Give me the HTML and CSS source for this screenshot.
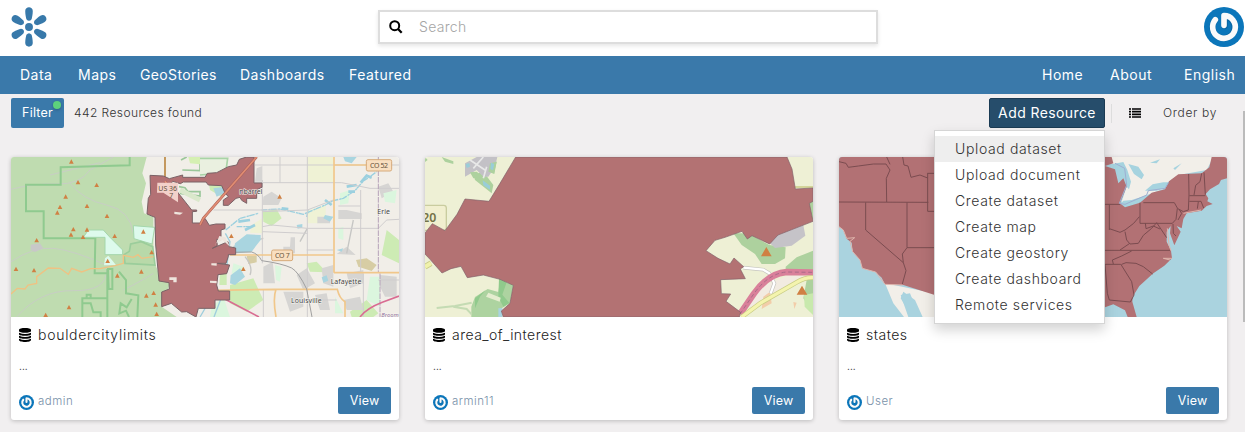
FILE: index.html
```html
<!DOCTYPE html>
<html lang="en">
<head>
<meta charset="utf-8">
<title>Resources</title>
<link rel="stylesheet" href="styles.css">
</head>
<body>
<svg class="defs" aria-hidden="true">
  <defs>
    <symbol id="gravatar" viewBox="0 0 120 120">
      <circle cx="60" cy="60" r="60" fill="#0b76ba"/>
      <path d="M62 57V28A33 33 0 1 1 34 39" fill="none" stroke="#07558a" stroke-width="19" stroke-linecap="round" opacity=".45"/>
      <path d="M60 55V26A34 34 0 1 1 34 38" fill="none" stroke="#fafafa" stroke-width="17" stroke-linecap="round" stroke-linejoin="round"/>
    </symbol>
    <symbol id="database" viewBox="0 0 36 42">
      <path d="M0 6C0-2 36-2 36 6V9C36 16 0 16 0 9Z"/>
      <path d="M0 14Q18 22 36 14V19C36 25 0 25 0 19Z"/>
      <path d="M0 23Q18 31 36 23V28C36 34 0 34 0 28Z"/>
      <path d="M0 32Q18 40 36 32V36C36 44 0 44 0 36Z"/>
    </symbol>
    <path id="petal" d="M77 32C77 17.500 100 17.500 100 32C100 43 98 50 96.500 57Q88.500 67 80.500 57C79 50 77 43 77 32Z"/>
    <path id="peak" d="M0-7L7 6H-7Z" fill="#d08043"/>
  </defs>
</svg>

<header class="header">
  <svg class="logo" viewBox="32 20 113 122" fill="#3879aa">
    <circle cx="88.500" cy="81" r="12"/>
    <use href="#petal"/>
    <use href="#petal" transform="rotate(59 88.500 81)"/>
    <use href="#petal" transform="rotate(121 88.500 81)"/>
    <use href="#petal" transform="rotate(180 88.500 81)"/>
    <use href="#petal" transform="rotate(239 88.500 81)"/>
    <use href="#petal" transform="rotate(301 88.500 81)"/>
  </svg>
  <div class="search">
    <svg class="search-icon" viewBox="0 0 14 14"><circle cx="5.700" cy="5.700" r="4.500" fill="none" stroke="#000" stroke-width="2"/><path d="M9 9L12.700 12.700" stroke="#000" stroke-width="2.300"/></svg>
    <span class="placeholder">Search</span>
  </div>
  <svg class="avatar"><use href="#gravatar"/></svg>
</header>

<nav class="nav">
  <div class="nav-main">
    <a class="w-data">Data</a><a class="w-maps">Maps</a><a class="w-stories">GeoStories</a><a class="w-dash">Dashboards</a><a>Featured</a>
  </div>
  <div class="nav-side">
    <a class="w-home">Home</a><a class="w-about">About</a><a class="w-lang">English</a>
  </div>
</nav>

<section class="toolbar">
  <div class="button filter">Filter<i class="dot"></i></div>
  <span class="count">442 Resources found</span>
  <div class="add-wrap">
    <div class="button add">Add Resource</div>
    <div class="menu">
      <a class="active">Upload dataset</a>
      <a>Upload document</a>
      <a>Create dataset</a>
      <a>Create map</a>
      <a>Create geostory</a>
      <a>Create dashboard</a>
      <a>Remote services</a>
    </div>
  </div>
  <i class="divider"></i>
  <svg class="list-icon" viewBox="0 0 12 10"><path d="M0 1H2M3 1H12M0 3.700H2M3 3.700H12M0 6.300H2M3 6.300H12M0 9H2M3 9H12" stroke="#000" stroke-width="1.700"/></svg>
  <span class="order">Order by</span>
</section>

<main class="cards">
  <article class="card">
    <svg class="map" viewBox="33 21 1164 480" preserveAspectRatio="none">
      <rect x="33" y="21" width="1164" height="480" fill="#f1eee8"/>
      <path d="M33 21H440L427 70L438 100L425 155L432 190L460 200V330L485 390L510 400L485 470L530 501H33Z" fill="#bfdcb0"/>
      <g fill="none" stroke="#c8cdc5" stroke-width="3">
        <path d="M33 118Q100 100 170 102T270 60L340 21M150 75L300 38M210 100Q250 150 320 165T400 250M33 335Q100 290 160 295T330 350M50 501Q120 420 220 422T320 360M370 420Q430 390 460 370"/>
      </g>
      <path d="M92 284L120 280L130 295L105 306L92 300Z" fill="#c8c8c8"/>
      <g fill="none" stroke="#8fca8f" stroke-width="6">
        <path d="M389 21V46L182 52V104H78V184H131V265H286L284 370H322V445H247V501M247 460H272L280 487H302V501M324 357H337V417H326ZM322 357V501M357 365L378 390V430L415 436L412 501M260 445V434H272V445M395 447L380 472L362 460L358 490L378 482L387 501"/>
      </g>
      <path d="M400 227L464 232L456 282L425 273L402 266ZM250 262L265 240L310 240L330 262L368 300V314H315V262Z" fill="#ddfaec" stroke="#a4d6ab" stroke-width="3"/>
      <path d="M372 314L388 304L392 282L424 275L458 290L465 345L375 340Z" fill="#b8d9a9" stroke="#9bcd9b" stroke-width="5"/>
      <path d="M315 325L325 317L348 345L312 346Z" fill="#ddfaec"/>
      <path d="M33 432L52 415L75 417L84 405L110 400V380L145 354L180 355L205 373L215 355L245 366L272 356L300 356L345 347L370 340V316L400 322L414 314L425 325L460 320" fill="none" stroke="#efc283" stroke-width="4"/>
      <path d="M495 21V100M543 30L560 21M547 60L600 62V33M537 110L555 113L564 125H600V138L540 130" fill="none" stroke="#9bc79a" stroke-width="5"/>
      <path d="M495 21V90" stroke="#c98e51" stroke-width="5"/>
      <path d="M565 21H600V43L570 40Z" fill="#d5f0b2"/>
      <path d="M540 120L600 150" stroke="#dae8cb" stroke-width="15"/>
      <path d="M600 25H683L678 62L655 70L600 75" fill="#eaf0e0" stroke="#a8d3a6" stroke-width="5"/>
      <g transform="translate(600 0)">
        <path d="M322 21H400V96H322ZM322 182L377 165V220H322ZM155 225L187 205V250L150 248Z" fill="#eff2d5"/>
        <path d="M25 90L80 72L65 140L30 120ZM188 185L230 178L245 205L215 228L190 215ZM90 405L160 385L190 450L140 485L90 460ZM320 340L350 335L380 367L330 365ZM450 485L500 450L535 490L520 501H455ZM560 240L597 270V340L545 315ZM60 370H80V405H58Z" fill="#cdebb4"/>
        <path d="M140 318H170V337L145 342ZM468 330L500 325L530 345L515 363L475 350Z" fill="#d7cda4"/>
        <path d="M170 55L187 48V95H165ZM190 140L215 125L245 145L235 165H188ZM352 200H390V220H352ZM415 180H440L485 190V207H415ZM190 350L218 335L225 400H190ZM272 262H285V310H250V290H270ZM290 375L320 355L345 400L310 420ZM410 312L440 290L467 315ZM365 355L400 345V410L370 400ZM250 425H310V470L270 485ZM345 435L380 430L390 480H360ZM440 370L490 360V400L450 415ZM535 110L565 100L580 125L545 145ZM540 375L590 380V440H555L540 410ZM430 450L480 440L490 480H440Z" fill="#d6d5d3"/>
        <path d="M135 320Q160 350 150 375M322 235L300 275M440 310L460 210M190 265L100 290" stroke="#c6c6c4" stroke-width="4" fill="none"/>
        <g fill="#dbf6de"><path d="M35 470L70 440L90 501H30ZM510 380H540V470L500 450ZM405 440L430 490H405ZM100 340L130 350L120 385L95 370ZM550 130L590 120L585 160L555 155ZM420 130L450 120L445 160L420 165ZM225 345L245 350L240 395L228 390ZM415 235L430 230V270L415 265Z"/></g>
        <path d="M105 280L140 253L182 255V270L170 285L155 305L110 310L103 292ZM92 376L120 355L135 380L105 405L90 400ZM40 115L75 110L72 130L50 140ZM290 225L307 222V233L293 236ZM365 382L380 376L385 392L370 398ZM430 21H470L455 40L435 34ZM375 195L400 200L390 215L370 205ZM410 300L430 295L425 305Z" fill="#a9d5e0"/>
        <path d="M185 180L240 177L275 185L310 193L340 180L376 165L400 152L430 145L465 122L490 93L510 80L530 65M77 240L120 205L175 190M320 201L325 180M110 230L155 230" fill="none" stroke="#9bd0df" stroke-width="4" stroke-dasharray="17 3 7 1"/>
        <path d="M440 110L470 105M482 98L500 77L515 83M445 125H465M115 215L150 210M135 240L165 225M245 175L265 177M375 150L395 165" fill="none" stroke="#9bd0df" stroke-width="8"/>
        <g fill="none" stroke="#cfcdce" stroke-width="3">
          <path d="M165 45H597M240 21V98M165 98H425L510 115H597M187 90V340M40 180H240M322 21V420M187 185L322 180M322 235H535L560 210L597 208M482 120V368M322 180L400 150M415 168H482M187 245L322 250M320 300H400M322 418V501M322 450H410M190 418V501M490 370V501M535 390H597M187 230L215 225L322 235"/>
        </g>
        <path d="M535 21V368M540 370V501" stroke="#b5a2b9" stroke-width="3" stroke-dasharray="17 3" fill="none"/>
        <g fill="none" stroke="#f1c78a" stroke-width="5">
          <path d="M402 21V368M402 45H500M90 315H403M402 368H597M50 421L225 418H412Q418 445 435 455V501M228 418Q218 445 228 501"/>
        </g>
        <path d="M88 307L155 306Q175 312 185 332Q245 340 275 354Q295 365 320 417L336 501" fill="none" stroke="#a0a0a0" stroke-width="3"/>
        <path d="M30 423L90 455L177 501M480 501Q500 475 547 457L597 438" fill="none" stroke="#d96c92" stroke-width="5"/>
        <path d="M76 250L90 275L80 350M0 501L30 450M65 440L42 501" fill="none" stroke="#9fcedd" stroke-width="4"/>
      </g>
      <path d="M450 76L490 78L508 86L548 75V82H615L622 70L650 68L685 50L710 45L718 28L740 21H762V99H786V112L770 119V145H740V160L725 151L720 142L708 145L685 166H670V150L685 140L675 129L665 107L625 105L618 96H550L541 101L518 94L513 101L541 137L575 180H590V184L577 185V219H599L615 205L628 226L648 222H675V236L663 240V270L650 268L652 287L637 295L684 275L687 290L707 294V314H685V319L678 340H652L689 345L680 371L654 374L650 405L655 423H689V450H645V475H595L588 501L560 485L545 486L514 460L485 470V426L508 417L507 398L477 393L467 285L465 202L441 192L445 145L452 133Z" fill="#b37174" stroke="#7a6266" stroke-width="3"/>
      <path d="M523 185L549 188L540 194L523 192ZM508 382L530 382V397H520V390H508ZM634 340L650 340V347L634 346ZM630 392L650 393V400L630 398ZM645 289L658 258L676 262L690 290L668 270L648 280Z" fill="#eee5dd"/>
      <path d="M600 225L610 205L770 21M495 94L517 122" fill="none" stroke="#a85f58" stroke-width="8"/>
      <path d="M600 225L610 205L770 21M495 94L517 122" fill="none" stroke="#e08c72" stroke-width="5"/>
      <path d="M472 98H534V157L490 128H471Z" fill="#f3d1ca"/>
      <g class="road"><text x="475" y="122">US 36</text><text x="508" y="143">7</text></g>
      <g>
        <use href="#peak" x="214" y="35"/><use href="#peak" x="234" y="97"/><use href="#peak" x="290" y="105"/><use href="#peak" x="197" y="140"/><use href="#peak" x="180" y="171"/><use href="#peak" x="172" y="188"/><use href="#peak" x="261" y="168"/><use href="#peak" x="321" y="198"/><use href="#peak" x="220" y="238"/><use href="#peak" x="213" y="254"/><use href="#peak" x="261" y="239"/><use href="#peak" x="249" y="261"/><use href="#peak" x="344" y="258"/><use href="#peak" x="110" y="271"/><use href="#peak" x="323" y="333"/><use href="#peak" x="48" y="357"/><use href="#peak" x="102" y="361"/><use href="#peak" x="352" y="377"/><use href="#peak" x="424" y="365"/><use href="#peak" x="430" y="245"/><use href="#peak" x="455" y="307"/><use href="#peak" x="439" y="437"/><use href="#peak" x="461" y="429"/><use href="#peak" x="467" y="464"/><use href="#peak" x="470" y="492"/><use href="#peak" x="207" y="472"/><use href="#peak" x="137" y="495"/><use href="#peak" x="839" y="140"/><use href="#peak" x="694" y="258"/><use href="#peak" x="730" y="357"/>
      </g>
      <g fill="#f9dfc0" stroke="#d6aa7a" stroke-width="3"><rect x="1099" y="29" width="76" height="34" rx="5"/><rect x="815" y="300" width="63" height="32" rx="5"/></g>
      <g class="road"><text x="1110" y="54" textLength="54">CO 52</text><text x="825" y="324" textLength="44">CO 7</text></g>
      <g class="place"><text x="718" y="131" textLength="69">nbarrel</text><text x="1132" y="191" textLength="38">Erie</text><text x="992" y="401" textLength="92">Lafayette</text><text x="873" y="459" textLength="92">Louisville</text><text x="1144" y="501" class="county" textLength="52">Broom</text></g>
    </svg>
    <div class="body">
      <div class="title"><svg class="db"><use href="#database"/></svg><span class="t1">bouldercitylimits</span></div>
      <p class="desc">...</p>
      <div class="foot"><svg class="mini"><use href="#gravatar"/></svg><span class="owner">admin</span><div class="button view">View</div></div>
    </div>
  </article>

  <article class="card">
    <svg class="map" viewBox="15 21 1164 480" preserveAspectRatio="none">
      <rect x="15" y="21" width="1164" height="480" fill="#eef0d5"/>
      <path d="M65 21L100 34V42L75 35ZM15 21L23 30L15 36ZM160 75L190 65L220 105L215 130L165 90ZM210 38L230 35L223 72L205 65Z" fill="#add19e"/>
      <path d="M135 40L170 21H232L225 50L205 80H190L170 60L135 80Z" fill="#c3c1c6"/>
      <path d="M210 40L230 35L222 70L205 65ZM150 67L170 65L190 80L160 85Z" fill="#add19e"/>
      <path d="M150 30L195 60M190 21L160 55M200 50L190 85" stroke="#e8e8e8" stroke-width="5"/>
      <path d="M137 42L148 39L150 50L140 54ZM188 91L210 107V119L190 106ZM213 38L223 42L219 61L211 57Z" fill="#99cdd8"/>
      <path d="M154 501V470L165 441L203 417L235 426L240 390L280 405L270 460L245 475L240 501Z" fill="#add3a0"/>
      <path d="M237 385L260 397L247 434L268 459L250 470L235 440ZM165 445L197 420L180 440L165 475Z" fill="#90ca8c"/>
      <path d="M205 428L242 443L239 455L198 440Z" fill="#e5edcf"/>
      <path d="M50 474L105 468L155 458M100 470L140 477L155 493" fill="none" stroke="#c4dbb3" stroke-width="6"/>
      <path d="M235 475L247 474V501H235Z" fill="#a9d3df"/>
      <path d="M15 350L33 340" stroke="#c9cb85" stroke-width="17"/><path d="M15 350L33 340" stroke="#f0f2ab" stroke-width="12"/>
      <rect x="-30" y="166" width="109" height="75" rx="8" fill="#f1efcf" stroke="#c9cc9f" stroke-width="4"/>
      <text x="7" y="216" class="shield" textLength="42">20</text>
      <path d="M940 250L985 250L1048 285L1097 292L1095 325L1065 342H1025L1005 312L965 285ZM1165 158L1179 150V215ZM1097 350L1130 322L1179 302V365H1097ZM1160 390L1179 380V490L1150 445Z" fill="#add19e"/>
      <path d="M1050 280L1065 257L1150 225L1156 257L1115 287L1065 294Z" fill="#c5c3c8"/>
      <path d="M970 460L1020 410L1110 375L1170 380L1080 430L1000 475Z" fill="#f2ebe1"/>
      <path d="M1152 435L1179 430V495L1154 470Z" fill="#c8e9ad"/>
      <path d="M1030 440L1050 425L1055 460L1025 477ZM1120 456L1130 458L1123 477Z" fill="#f2cda9"/>
      <path d="M970 353L1030 359L1048 370L1063 400L1052 430" fill="none" stroke="#c6c5c0" stroke-width="11"/><path d="M970 353L1030 359L1048 370L1063 400L1052 430" fill="none" stroke="#fff" stroke-width="7"/>
      <path d="M960 492L1001 432Q1045 370 1100 366L1179 367" fill="none" stroke="#d9809a" stroke-width="19"/>
      <path d="M960 492L1001 432Q1045 370 1100 366L1179 367" fill="none" stroke="#a96c88" stroke-width="3" stroke-dasharray="12 8"/>
      <path d="M965 501L1020 460L1130 397Q1155 382 1179 383" fill="none" stroke="#c9cd85" stroke-width="14"/><path d="M965 501L1020 460L1130 397Q1155 382 1179 383" fill="none" stroke="#f4f4ae" stroke-width="10"/>
      <path d="M1125 111H1179" stroke="#d3d49a" stroke-width="6"/>
      <path d="M287 21L240 100L207 154L135 147L111 193L75 242L37 221L15 249V312L30 328L66 369L93 356L123 349L142 383L190 375L240 388L280 406L270 460L244 483L250 501H958L962 487L918 454L932 432L904 431L902 389L976 386L961 357L971 350L942 324L930 342L894 325L858 302L885 271L915 262L966 244L982 267L996 257L1049 282L1074 255L1179 214L1168 160L1179 154V114L1126 117L1116 57L1101 21Z" fill="#b37273" stroke="#81606a" stroke-width="2"/>
      <path d="M1039 291L1055 319H1023ZM1146 407L1162 434H1130Z" fill="#d08043"/>
    </svg>
    <div class="body">
      <div class="title"><svg class="db"><use href="#database"/></svg><span class="t2">area_of_interest</span></div>
      <p class="desc">...</p>
      <div class="foot"><svg class="mini"><use href="#gravatar"/></svg><span class="owner">armin11</span><div class="button view">View</div></div>
    </div>
  </article>

  <article class="card">
    <svg class="map" viewBox="27 21 1164 480" preserveAspectRatio="none">
      <rect x="27" y="21" width="1164" height="480" fill="#aad3df"/>
      <path d="M165 400L312 430V501H278L255 450L220 425L212 445L245 501H222L190 460ZM810 21H1150L1130 60L1045 75L1010 100L960 130L885 165L875 155L890 110L880 60Z" fill="#f2efe9"/>
      <path d="M850 40Q885 30 890 60L900 95L925 90L945 105L935 115L905 105L880 165L965 130L1015 112V97L970 100L945 122L940 65L910 45L905 75L880 40L860 55Z" fill="#f2efe9"/>
      <path d="M848 42L880 36L892 60L903 95L897 118L880 100L862 100L866 78L850 60ZM895 42L925 50L942 75L935 88L912 72ZM960 38L990 28L980 40ZM1030 55L1055 40L1035 60ZM945 122L968 103L1000 97L1017 97L1013 112L980 122ZM868 165L880 152L905 150L960 133L940 155L900 170L880 172Z" fill="#a6d3df"/>
      <path d="M27 21H845L850 40L825 48L855 58L865 100L880 85L890 110L870 160L885 172L930 158L965 128L1005 118L1017 94L1045 73L1115 70L1138 52L1145 21H1191V85L1173 90L1167 102L1140 118L1127 132L1135 145L1132 154L1148 162L1130 168L1115 182L1070 190L1060 207L1055 235L1040 228L1052 245L1033 286L1020 250L1022 228L1010 245V275L1023 302L1026 325L1003 347L970 370L928 408L908 440L907 455L920 501H893L885 481L850 463L825 472V440H312V434L220 405L165 403L155 383L137 366L97 355L90 330L68 305L65 278L50 266L40 240L27 230Z" fill="#b27174"/>
      <g fill="none" stroke="#7b4c50" stroke-width="3" stroke-linejoin="round">
        <path d="M27 35L48 40L55 52L85 48L130 42L168 42L180 60L169 85L170 156M180 43L170 21M27 156L295 157M107 157V240L220 338M231 157V293L217 312L220 338L228 362L217 402M231 293H312M218 21L222 45L234 48L243 82L270 75L293 84M292 70H312M293 70V184H312M315 157V430"/>
        <path d="M825 163H838V240M838 163H870M930 158V220H1027L1038 208L1042 175L1060 185L1075 180L1077 135L1076 72M1092 135L1097 106L1110 95L1115 70M1122 67L1126 134M1078 137H1126M1078 154H1113L1121 174M1105 155L1102 176M940 158H1033L1042 174M838 236L870 247L885 240L911 220L928 200M885 245L890 270L900 282L925 280L940 256L965 235L980 218L1010 263M898 281L870 300M946 219L948 236L970 228L990 237M825 301H1020M825 343H872M850 342L847 330L875 318L905 303M872 342L905 395L912 435L901 456L838 450L832 430L825 343M875 343L888 338L918 340L940 350L968 372M1029 222L1030 250L1038 258M1047 178L1055 190L1044 210"/>
      </g>
      <path d="M27 230L40 240L50 265L74 263L60 274L68 305L90 330L97 355L137 366L165 403L218 405M1060 190L1113 180M1012 235L1017 285L1023 302M1026 325L1000 325L1020 330" fill="none" stroke="#dfb5ad" stroke-width="3"/>
      <path d="M855 40L884 55L890 105L868 160L885 163L950 135L955 122L1005 115L1016 97" fill="none" stroke="#9eafd2" stroke-width="3"/>
      <path d="M212 435L240 430L250 455L275 501H235Z" fill="#a9d3df"/>
    </svg>
    <div class="body">
      <div class="title"><svg class="db"><use href="#database"/></svg><span class="t3">states</span></div>
      <p class="desc">...</p>
      <div class="foot"><svg class="mini"><use href="#gravatar"/></svg><span class="owner">User</span><div class="button view">View</div></div>
    </div>
  </article>
</main>
<i class="scrollbar"></i>
</body>
</html>
```
FILE: styles.css
```css
* { box-sizing: border-box; }
body {
  margin: 0;
  width: 1245px;
  height: 432px;
  overflow: hidden;
  position: relative;
  background: #f1eff0;
  color: #333;
  font-family: Inter, "Open Sans", sans-serif;
  font-size: 14px;
  white-space: nowrap;
}
.defs { position: absolute; width: 0; height: 0; }
.header {
  height: 56px;
  padding: 7px 1px 0 11px;
  background: #fff;
  display: flex;
  justify-content: space-between;
}
.logo { width: 38px; height: 40px; margin-left: -1px; }
.avatar { width: 40px; height: 40px; }
.search {
  width: 500px;
  height: 34px;
  margin: 3px 0 0 4px;
  border: 2px solid #ddd;
  box-shadow: 0 2px 4px rgba(0,0,0,.1);
  display: flex;
  align-items: center;
  padding-left: 9px;
}
.search-icon { width: 14px; height: 14px; margin-right: 16px; }
.placeholder { color: #a5a5a5; letter-spacing: .3px; font-weight: 300; padding-bottom: 2px; }
.nav {
  height: 38px;
  padding: 0 8px 1px 20px;
  background: #3a79aa;
  color: #fff;
  display: flex;
  justify-content: space-between;
  align-items: center;
  letter-spacing: .5px;
}
.nav a { display: inline-block; }
.nav-main, .nav-side { display: flex; }
.w-data { width: 58px; }
.w-maps { width: 62px; }
.w-stories { width: 100px; letter-spacing: .35px; }
.w-dash { width: 109px; }
.w-home { width: 68px; }
.w-about { width: 74px; }
.w-lang { width: 53px; }
.toolbar {
  height: 63px;
  padding: 4px 28px 0 11px;
  display: flex;
  align-items: flex-start;
  line-height: 30px;
  font-size: 12px;
}
.button { background: #3a79aa; color: #fff; border-radius: 2px; text-align: center; }
.filter { width: 53px; height: 30px; position: relative; font-size: 12.500px; letter-spacing: .2px; }
.dot {
  position: absolute;
  width: 8px;
  height: 8px;
  right: 3px;
  top: 3px;
  border-radius: 50%;
  background: #5dd17c;
  box-shadow: 0 1px 3px rgba(0,0,0,.25);
}
.count { margin-left: 10px; letter-spacing: .42px; font-weight: 350; }
.add-wrap { position: relative; margin-left: auto; }
.add {
  width: 116px;
  height: 30px;
  line-height: 28px;
  border: 1px solid #1b3b54;
  background: #264d6b;
  font-size: 14px;
  letter-spacing: .4px;
}
.menu {
  position: absolute;
  z-index: 2;
  right: 0;
  top: 32px;
  width: 171px;
  height: 194px;
  padding: 5px 0;
  background: #fff;
  border: 1px solid #d5d5d5;
  box-shadow: 0 6px 12px rgba(0,0,0,.175);
  font-size: 14px;
  font-weight: 300;
  letter-spacing: .63px;
}
.menu a { display: block; height: 26px; line-height: 26px; padding-left: 20px; }
.menu .active { background: #eee; }
.divider { width: 1px; height: 19px; margin: 6px 17px 0 6px; background: #ddd; }
.list-icon { width: 12px; height: 10px; margin: 10px 22px 0 0; }
.order { width: 54px; letter-spacing: .65px; font-weight: 350; }
.cards { display: grid; grid-template-columns: repeat(3, 388px); gap: 26px; padding-left: 11px; }
.card {
  height: 263px;
  background: #fff;
  border-radius: 3px;
  overflow: hidden;
  box-shadow: 0 1px 4px rgba(0,0,0,.22);
}
.map { display: block; width: 388px; height: 160px; }
.body { padding: 10px 8px 0; }
.title { display: flex; align-items: center; height: 16px; gap: 7px; color: #222; font-weight: 300; }
.title span { padding-bottom: 2px; }
.db { width: 12px; height: 14px; }
.t1 { letter-spacing: .72px; }
.t2 { letter-spacing: .47px; }
.t3 { letter-spacing: .5px; }
.desc { margin: 14px 0 0; height: 18px; line-height: 18px; font-size: 10px; }
.foot { margin-top: 12px; height: 27px; display: flex; align-items: center; }
.mini { width: 15px; height: 15px; margin-top: 4px; }
.owner { margin-left: 4px; color: #7890a8; font-size: 11.500px; letter-spacing: .5px; font-weight: 350; }
.view { width: 53px; height: 27px; line-height: 27px; margin-left: auto; font-size: 12.500px; letter-spacing: .2px; }
.scrollbar { position: absolute; right: 0; top: 111px; width: 2px; height: 211px; background: #bbb; }
.map text { font-family: "Noto Sans", sans-serif; fill: #444; }
.map .road text { font-size: 21px; fill: #65523c; }
.map .place text { font-size: 21px; stroke: #f7f5ef; stroke-width: 3px; paint-order: stroke; }
.map .place .county { fill: #9273a0; font-size: 18px; font-style: italic; }
.map .shield { font-size: 37px; font-weight: 600; fill: #747247; }
```
